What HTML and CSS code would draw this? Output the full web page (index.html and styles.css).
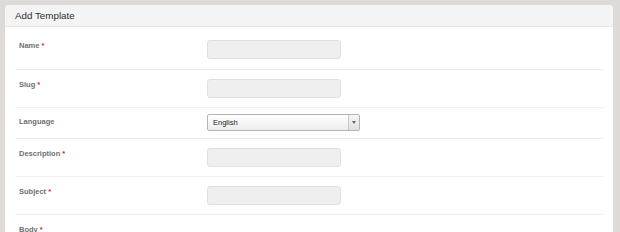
FILE: index.html
```html
<!DOCTYPE html>
<html lang="en">
<head>
    <meta charset="utf-8" />
    <title>Add Template</title>
    <link rel="stylesheet" href="styles.css">
</head>
<body>
    <div class="panel">
        <div class="panel-heading">Add Template</div>
        <div class="panel-body">
            <div class="form-row first">
                <label class="form-label">Name <span class="req">*</span></label>
                <div class="form-field"><span class="text-input"></span></div>
            </div>
            <div class="form-row">
                <label class="form-label">Slug <span class="req">*</span></label>
                <div class="form-field"><span class="text-input"></span></div>
            </div>
            <div class="form-row compact">
                <label class="form-label">Language</label>
                <div class="form-field">
                    <div class="select-box">
                        <span class="select-value">English</span>
                        <span class="select-arrow"><span class="caret"></span></span>
                    </div>
                </div>
            </div>
            <div class="form-row">
                <label class="form-label">Description <span class="req">*</span></label>
                <div class="form-field"><span class="text-input"></span></div>
            </div>
            <div class="form-row">
                <label class="form-label">Subject <span class="req">*</span></label>
                <div class="form-field"><span class="text-input"></span></div>
            </div>
            <div class="form-row last">
                <label class="form-label">Body <span class="req">*</span></label>
                <div class="form-field"></div>
            </div>
        </div>
    </div>
</body>
</html>
```

FILE: styles.css
```css
html, body {
    margin: 0;
    padding: 0;
    background: #dedad8;
    font-family: "Liberation Sans", Arial, sans-serif;
    overflow: hidden;
    height: 232px;
}

.panel {
    margin: 5px 7px 0 5px;
    background: #fff;
    border-radius: 4px 4px 0 0;
    height: 240px;
}

.panel-heading {
    height: 21px;
    line-height: 22px;
    padding-left: 10px;
    font-size: 9.8px;
    color: #2e2e2e;
    background: #f4f4f4;
    border-bottom: 1px solid #e6e6e6;
    border-radius: 4px 4px 0 0;
}

.panel-body {
    padding: 0 10px;
}

.form-row {
    display: flex;
    padding: 9px 0 9px;
    border-bottom: 1px solid #f0f0f0;
}

.form-row.first {
    padding: 13px 0 10px;
}

.form-row.compact {
    padding: 6px 0 7px;
}

.form-row.compact .form-label {
    padding-top: 3px;
}

.form-row.last {
    border-bottom: none;
}

.form-label {
    width: 188px;
    padding-left: 4px;
    padding-top: 1px;
    font-size: 7.5px;
    line-height: 10px;
    font-weight: bold;
    color: #707070;
}

.req {
    color: #e02020;
}

.text-input {
    display: block;
    width: 132px;
    height: 17px;
    background: #efefef;
    border: 1px solid #e0e0e0;
    border-radius: 3px;
}

.select-box {
    display: flex;
    width: 151px;
    height: 15px;
    border: 1px solid #b4b4b4;
    border-radius: 2px;
    background: linear-gradient(#ffffff, #ececec);
    box-shadow: inset 0 1px 0 #fff;
}

.select-value {
    flex: 1;
    padding-left: 5px;
    font-size: 7.5px;
    line-height: 15px;
    color: #222;
}

.select-arrow {
    width: 10px;
    border-left: 1px solid #c8c8c8;
    background: linear-gradient(#f6f6f6, #e0e0e0);
    display: flex;
    align-items: center;
    justify-content: center;
}

.caret {
    width: 0;
    height: 0;
    border-left: 2px solid transparent;
    border-right: 2px solid transparent;
    border-top: 3px solid #666;
}
```
